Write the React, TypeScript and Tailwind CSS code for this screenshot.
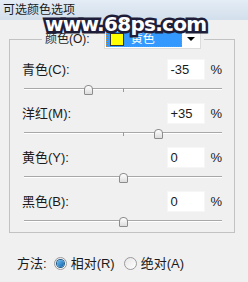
import React from "react";

interface Channel {
  label: string;
  value: string;
  pos: number;
}

const channels: Channel[] = [
  { label: "青色(C):", value: "-35", pos: -35 },
  { label: "洋红(M):", value: "+35", pos: 35 },
  { label: "黄色(Y):", value: "0", pos: 0 },
  { label: "黑色(B):", value: "0", pos: 0 },
];

const font = "font-['Liberation_Sans','Noto_Sans_CJK_SC',sans-serif]";

function Slider({ pos }: { pos: number }) {
  // track is 198px wide, centre at 99, 1px per percent
  const left = 99 + pos - 4;
  return (
    <div className="relative ml-[2px] mt-[5px] h-[10px] w-[198px]">
      <div className="absolute left-0 right-0 top-[3px] h-[2px] border-t border-[#a8a8a8] border-b border-b-white" />
      <div className="absolute left-[99px] top-[3px] h-[4px] w-px bg-[#9a9a9a]" />
      <div
        className="absolute top-0 h-[10px] w-[9px] rounded-t-[4px] rounded-b-[1px] border border-[#8c8c8c] bg-gradient-to-b from-white to-[#dcdcdc]"
        style={{ left }}
      />
    </div>
  );
}

function Radio({ checked, label }: { checked: boolean; label: string }) {
  return (
    <div className="flex items-center">
      <div className="flex h-[13px] w-[13px] items-center justify-center rounded-full border border-[#9a9a9a] bg-gradient-to-br from-[#e6e6e6] to-white">
        {checked && (
          <div className="h-[7px] w-[7px] rounded-full bg-gradient-to-br from-[#6fc3f5] to-[#0c5fa8] ring-1 ring-[#1d5a8a]" />
        )}
      </div>
      <span className="ml-[4px]">{label}</span>
    </div>
  );
}

export default function App() {
  return (
    <div
      className={`relative h-[282px] w-[248px] overflow-hidden bg-[#f0f0f0] text-[13px] leading-none text-[#1a1a1a] ${font}`}
    >
      {/* title bar */}
      <div className="flex h-[20px] items-center bg-gradient-to-b from-[#e4ecf5] to-[#d2dfec] pl-[3px] text-[12px]">
        可选颜色选项
      </div>

      <fieldset className="ml-[9px] mt-[10px] w-[226px] border border-[#c2c2c2] px-[12px] pb-[5px]">
        <legend className="ml-[20px] px-[3px]">
          <div className="flex h-[18px] items-center">
            <span className="text-[12px]">颜色(O):</span>
            <div className="ml-[14px] flex h-[19px] w-[97px] border border-[#dcdcdc] bg-white p-px">
              <div className="flex w-[76px] items-center border border-dotted border-[#c9892f] bg-[#3399ff]">
                <div className="ml-[3px] h-[13px] w-[14px] border border-[#333] bg-[#ffff00]" />
                <span className="ml-[7px] text-[12px] text-white">黄色</span>
              </div>
              <div className="flex flex-1 items-center justify-end pr-[4px]">
                <div className="h-0 w-0 border-x-[4px] border-t-[4px] border-x-transparent border-t-black" />
              </div>
            </div>
          </div>
        </legend>

        <div className="pt-[11px]">
          {channels.map((c, i) => (
            <div key={c.label} className={i > 0 ? "mt-[8px]" : ""}>
              <div className="flex h-[21px] items-center">
                <span>{c.label}</span>
                <div className="ml-auto flex h-[21px] w-[38px] items-center border border-[#f6f6f6] bg-white pl-[2px]">
                  {c.value}
                </div>
                <span className="ml-[5px]">%</span>
              </div>
              <Slider pos={c.pos} />
            </div>
          ))}
        </div>
      </fieldset>

      <div className="ml-[17px] mt-[24px] flex items-center">
        <span>方法:</span>
        <div className="ml-[7px]">
          <Radio checked label="相对(R)" />
        </div>
        <div className="ml-[9px]">
          <Radio checked={false} label="绝对(A)" />
        </div>
      </div>

      {/* watermark over the dialog */}
      <div className="absolute left-[45px] top-[14px] font-['DejaVu_Sans',sans-serif] text-[20px] font-bold leading-none tracking-[-0.7px] text-white [-webkit-text-stroke:5px_#1e1e3a] [paint-order:stroke_fill]">
        www.68ps.com
      </div>
    </div>
  );
}
